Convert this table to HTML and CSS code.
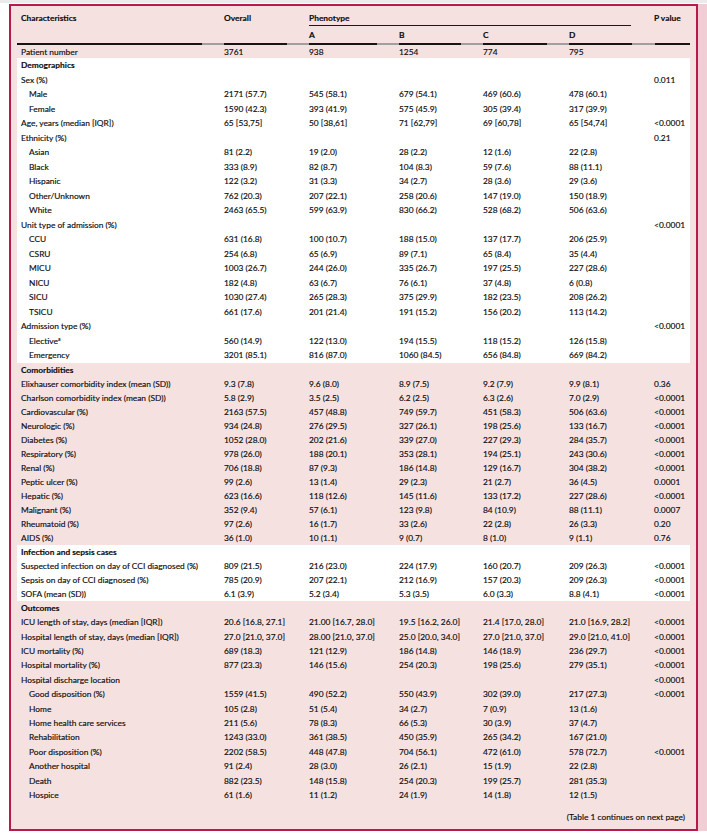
FILE: index.html
```html
<!DOCTYPE html>
<html lang="en">
<head>
<meta charset="utf-8">
<title>Table 1</title>
<link rel="stylesheet" href="styles.css">
</head>
<body>
<div class="topline"></div>
<div class="panel">
  <table class="t">
    <colgroup>
      <col class="c-label"><col class="c-overall"><col class="c-a"><col class="c-b"><col class="c-c"><col class="c-d"><col class="c-p">
    </colgroup>
    <thead>
      <tr class="h1">
        <th>Characteristics</th>
        <th>Overall</th>
        <th colspan="4" class="pheno-cell"><div class="pheno">Phenotype</div></th>
        <th>P value</th>
      </tr>
      <tr class="h2">
        <th class="first"></th>
        <th></th>
        <th>A</th>
        <th>B</th>
        <th>C</th>
        <th>D</th>
        <th class="last"></th>
      </tr>
    </thead>
    <tbody class="pat">
      <tr><td>Patient number</td><td>3761</td><td>938</td><td>1254</td><td>774</td><td>795</td><td></td></tr>
    </tbody>
    <tbody class="blk white r145">
      <tr><td class="sec">Demographics</td><td></td><td></td><td></td><td></td><td></td><td></td></tr>
      <tr><td>Sex (%)</td><td></td><td></td><td></td><td></td><td></td><td>0.011</td></tr>
      <tr><td class="ind">Male</td><td>2171 (57.7)</td><td>545 (58.1)</td><td>679 (54.1)</td><td>469 (60.6)</td><td>478 (60.1)</td><td></td></tr>
      <tr><td class="ind">Female</td><td>1590 (42.3)</td><td>393 (41.9)</td><td>575 (45.9)</td><td>305 (39.4)</td><td>317 (39.9)</td><td></td></tr>
      <tr><td>Age, years (median [IQR])</td><td>65 [53,75]</td><td>50 [38,61]</td><td>71 [62,79]</td><td>69 [60,78]</td><td>65 [54,74]</td><td>&lt;0.0001</td></tr>
      <tr><td>Ethnicity (%)</td><td></td><td></td><td></td><td></td><td></td><td>0.21</td></tr>
      <tr><td class="ind">Asian</td><td>81 (2.2)</td><td>19 (2.0)</td><td>28 (2.2)</td><td>12 (1.6)</td><td>22 (2.8)</td><td></td></tr>
      <tr><td class="ind">Black</td><td>333 (8.9)</td><td>82 (8.7)</td><td>104 (8.3)</td><td>59 (7.6)</td><td>88 (11.1)</td><td></td></tr>
      <tr><td class="ind">Hispanic</td><td>122 (3.2)</td><td>31 (3.3)</td><td>34 (2.7)</td><td>28 (3.6)</td><td>29 (3.6)</td><td></td></tr>
      <tr><td class="ind">Other/Unknown</td><td>762 (20.3)</td><td>207 (22.1)</td><td>258 (20.6)</td><td>147 (19.0)</td><td>150 (18.9)</td><td></td></tr>
      <tr><td class="ind">White</td><td>2463 (65.5)</td><td>599 (63.9)</td><td>830 (66.2)</td><td>528 (68.2)</td><td>506 (63.6)</td><td></td></tr>
      <tr><td>Unit type of admission (%)</td><td></td><td></td><td></td><td></td><td></td><td>&lt;0.0001</td></tr>
      <tr><td class="ind">CCU</td><td>631 (16.8)</td><td>100 (10.7)</td><td>188 (15.0)</td><td>137 (17.7)</td><td>206 (25.9)</td><td></td></tr>
      <tr><td class="ind">CSRU</td><td>254 (6.8)</td><td>65 (6.9)</td><td>89 (7.1)</td><td>65 (8.4)</td><td>35 (4.4)</td><td></td></tr>
      <tr><td class="ind">MICU</td><td>1003 (26.7)</td><td>244 (26.0)</td><td>335 (26.7)</td><td>197 (25.5)</td><td>227 (28.6)</td><td></td></tr>
      <tr><td class="ind">NICU</td><td>182 (4.8)</td><td>63 (6.7)</td><td>76 (6.1)</td><td>37 (4.8)</td><td>6 (0.8)</td><td></td></tr>
      <tr><td class="ind">SICU</td><td>1030 (27.4)</td><td>265 (28.3)</td><td>375 (29.9)</td><td>182 (23.5)</td><td>208 (26.2)</td><td></td></tr>
      <tr><td class="ind">TSICU</td><td>661 (17.6)</td><td>201 (21.4)</td><td>191 (15.2)</td><td>156 (20.2)</td><td>113 (14.2)</td><td></td></tr>
      <tr><td>Admission type (%)</td><td></td><td></td><td></td><td></td><td></td><td>&lt;0.0001</td></tr>
      <tr><td class="ind">Elective<sup>a</sup></td><td>560 (14.9)</td><td>122 (13.0)</td><td>194 (15.5)</td><td>118 (15.2)</td><td>126 (15.8)</td><td></td></tr>
      <tr><td class="ind">Emergency</td><td>3201 (85.1)</td><td>816 (87.0)</td><td>1060 (84.5)</td><td>656 (84.8)</td><td>669 (84.2)</td><td></td></tr>
    </tbody>
    <tbody class="blk r14">
      <tr><td class="sec">Comorbidities</td><td></td><td></td><td></td><td></td><td></td><td></td></tr>
      <tr><td>Elixhauser comorbidity index (mean (SD))</td><td>9.3 (7.8)</td><td>9.6 (8.0)</td><td>8.9 (7.5)</td><td>9.2 (7.9)</td><td>9.9 (8.1)</td><td>0.36</td></tr>
      <tr><td>Charlson comorbidity index (mean (SD))</td><td>5.8 (2.9)</td><td>3.5 (2.5)</td><td>6.2 (2.5)</td><td>6.3 (2.6)</td><td>7.0 (2.9)</td><td>&lt;0.0001</td></tr>
      <tr><td>Cardiovascular (%)</td><td>2163 (57.5)</td><td>457 (48.8)</td><td>749 (59.7)</td><td>451 (58.3)</td><td>506 (63.6)</td><td>&lt;0.0001</td></tr>
      <tr><td>Neurologic (%)</td><td>934 (24.8)</td><td>276 (29.5)</td><td>327 (26.1)</td><td>198 (25.6)</td><td>133 (16.7)</td><td>&lt;0.0001</td></tr>
      <tr><td>Diabetes (%)</td><td>1052 (28.0)</td><td>202 (21.6)</td><td>339 (27.0)</td><td>227 (29.3)</td><td>284 (35.7)</td><td>&lt;0.0001</td></tr>
      <tr><td>Respiratory (%)</td><td>978 (26.0)</td><td>188 (20.1)</td><td>353 (28.1)</td><td>194 (25.1)</td><td>243 (30.6)</td><td>&lt;0.0001</td></tr>
      <tr><td>Renal (%)</td><td>706 (18.8)</td><td>87 (9.3)</td><td>186 (14.8)</td><td>129 (16.7)</td><td>304 (38.2)</td><td>&lt;0.0001</td></tr>
      <tr><td>Peptic ulcer (%)</td><td>99 (2.6)</td><td>13 (1.4)</td><td>29 (2.3)</td><td>21 (2.7)</td><td>36 (4.5)</td><td>0.0001</td></tr>
      <tr><td>Hepatic (%)</td><td>623 (16.6)</td><td>118 (12.6)</td><td>145 (11.6)</td><td>133 (17.2)</td><td>227 (28.6)</td><td>&lt;0.0001</td></tr>
      <tr><td>Malignant (%)</td><td>352 (9.4)</td><td>57 (6.1)</td><td>123 (9.8)</td><td>84 (10.9)</td><td>88 (11.1)</td><td>0.0007</td></tr>
      <tr><td>Rheumatoid (%)</td><td>97 (2.6)</td><td>16 (1.7)</td><td>33 (2.6)</td><td>22 (2.8)</td><td>26 (3.3)</td><td>0.20</td></tr>
      <tr><td>AIDS (%)</td><td>36 (1.0)</td><td>10 (1.1)</td><td>9 (0.7)</td><td>8 (1.0)</td><td>9 (1.1)</td><td>0.76</td></tr>
    </tbody>
    <tbody class="blk white r14">
      <tr><td class="sec">Infection and sepsis cases</td><td></td><td></td><td></td><td></td><td></td><td></td></tr>
      <tr><td>Suspected infection on day of CCI diagnosed (%)</td><td>809 (21.5)</td><td>216 (23.0)</td><td>224 (17.9)</td><td>160 (20.7)</td><td>209 (26.3)</td><td>&lt;0.0001</td></tr>
      <tr><td>Sepsis on day of CCI diagnosed (%)</td><td>785 (20.9)</td><td>207 (22.1)</td><td>212 (16.9)</td><td>157 (20.3)</td><td>209 (26.3)</td><td>&lt;0.0001</td></tr>
      <tr><td>SOFA (mean (SD))</td><td>6.1 (3.9)</td><td>5.2 (3.4)</td><td>5.3 (3.5)</td><td>6.0 (3.3)</td><td>8.8 (4.1)</td><td>&lt;0.0001</td></tr>
    </tbody>
    <tbody class="blk r144">
      <tr><td class="sec">Outcomes</td><td></td><td></td><td></td><td></td><td></td><td></td></tr>
      <tr><td>ICU length of stay, days (median [IQR])</td><td>20.6 [16.8, 27.1]</td><td>21.00 [16.7, 28.0]</td><td>19.5 [16.2, 26.0]</td><td>21.4 [17.0, 28.0]</td><td>21.0 [16.9, 28.2]</td><td>&lt;0.0001</td></tr>
      <tr><td>Hospital length of stay, days (median [IQR])</td><td>27.0 [21.0, 37.0]</td><td>28.00 [21.0, 37.0]</td><td>25.0 [20.0, 34.0]</td><td>27.0 [21.0, 37.0]</td><td>29.0 [21.0, 41.0]</td><td>&lt;0.0001</td></tr>
      <tr><td>ICU mortality (%)</td><td>689 (18.3)</td><td>121 (12.9)</td><td>186 (14.8)</td><td>146 (18.9)</td><td>236 (29.7)</td><td>&lt;0.0001</td></tr>
      <tr><td>Hospital mortality (%)</td><td>877 (23.3)</td><td>146 (15.6)</td><td>254 (20.3)</td><td>198 (25.6)</td><td>279 (35.1)</td><td>&lt;0.0001</td></tr>
      <tr><td>Hospital discharge location</td><td></td><td></td><td></td><td></td><td></td><td>&lt;0.0001</td></tr>
      <tr><td class="ind">Good disposition (%)</td><td>1559 (41.5)</td><td>490 (52.2)</td><td>550 (43.9)</td><td>302 (39.0)</td><td>217 (27.3)</td><td>&lt;0.0001</td></tr>
      <tr><td class="ind">Home</td><td>105 (2.8)</td><td>51 (5.4)</td><td>34 (2.7)</td><td>7 (0.9)</td><td>13 (1.6)</td><td></td></tr>
      <tr><td class="ind">Home health care services</td><td>211 (5.6)</td><td>78 (8.3)</td><td>66 (5.3)</td><td>30 (3.9)</td><td>37 (4.7)</td><td></td></tr>
      <tr><td class="ind">Rehabilitation</td><td>1243 (33.0)</td><td>361 (38.5)</td><td>450 (35.9)</td><td>265 (34.2)</td><td>167 (21.0)</td><td></td></tr>
      <tr><td class="ind">Poor disposition (%)</td><td>2202 (58.5)</td><td>448 (47.8)</td><td>704 (56.1)</td><td>472 (61.0)</td><td>578 (72.7)</td><td>&lt;0.0001</td></tr>
      <tr><td class="ind">Another hospital</td><td>91 (2.4)</td><td>28 (3.0)</td><td>26 (2.1)</td><td>15 (1.9)</td><td>22 (2.8)</td><td></td></tr>
      <tr><td class="ind">Death</td><td>882 (23.5)</td><td>148 (15.8)</td><td>254 (20.3)</td><td>199 (25.7)</td><td>281 (35.3)</td><td></td></tr>
      <tr><td class="ind">Hospice</td><td>61 (1.6)</td><td>11 (1.2)</td><td>24 (1.9)</td><td>14 (1.8)</td><td>12 (1.5)</td><td></td></tr>
    </tbody>
  </table>
  <div class="cont">(Table 1 continues on next page)</div>
</div>
</body>
</html>
```

FILE: styles.css
```css
html, body {
  margin: 0;
  padding: 0;
  background: #ffffff;
}

body {
  font-family: "Lato", "Open Sans", sans-serif;
  font-size: 8.4px;
  color: #0d0d0d;
  -webkit-text-stroke: 0.15px #0d0d0d;
}

.topline {
  height: 3px;
  background: #ebebeb;
  margin-bottom: 1px;
}

.panel {
  margin-left: 9px;
  padding: 0 6px;
  box-sizing: content-box;
  width: 673px;
  border: 2px solid #b81a4c;
  background: #f6e1e1;
  box-shadow: 9px 0 0 #f1cdd5;
}

.t {
  border-collapse: collapse;
  table-layout: fixed;
  width: 673px;
}

.c-label { width: 203px; }
.c-overall { width: 85px; }
.c-a { width: 90px; }
.c-b { width: 84px; }
.c-c { width: 86px; }
.c-d { width: 85px; }
.c-p { width: 40px; }

.t th,
.t td {
  padding: 0 0 0 4px;
  text-align: left;
  white-space: nowrap;
  font-weight: 400;
}

.t th {
  font-weight: 700;
}

.h1 th {
  height: 20px;
  box-sizing: border-box;
  vertical-align: bottom;
  line-height: 14px;
  padding-bottom: 1px;
}

.h1 th.pheno-cell {
  padding-bottom: 0;
}

.pheno {
  margin-right: 19px;
  border-bottom: 1px solid #1a1a1a;
}

.h2 th {
  height: 18.5px;
  box-sizing: border-box;
  vertical-align: top;
  line-height: 14px;
  padding-top: 2px;
  background: linear-gradient(to right, #a0a0a0 4px, #151515 4px, #151515 calc(100% - 18px), #a0a0a0 calc(100% - 18px)) no-repeat left bottom / 100% 2px;
}

.h2 th.first {
  background: linear-gradient(to right, #151515 calc(100% - 18px), #a0a0a0 calc(100% - 18px)) no-repeat left bottom / 100% 2px;
}

.h2 th.last {
  background: linear-gradient(to right, #a0a0a0 5px, #151515 5px) no-repeat left bottom / 100% 2px;
}

.pat td {
  height: 12.5px;
  line-height: 12.5px;
  padding-top: 1px;
}

.blk td {
  vertical-align: middle;
}

.r145 td {
  height: 14.52px;
  line-height: 14.52px;
}

.r14 td {
  height: 14px;
  line-height: 14px;
}

.r144 td {
  height: 14.4px;
  line-height: 14.4px;
}

.white td {
  background: #ffffff;
}

.t td.sec {
  font-weight: 700;
}

.t td.ind {
  padding-left: 12px;
}

sup {
  font-size: 5px;
  line-height: 0;
  vertical-align: 3px;
}

.cont {
  text-align: right;
  padding-right: 5px;
  line-height: 14px;
  padding-top: 7.4px;
  padding-bottom: 5px;
}
```
